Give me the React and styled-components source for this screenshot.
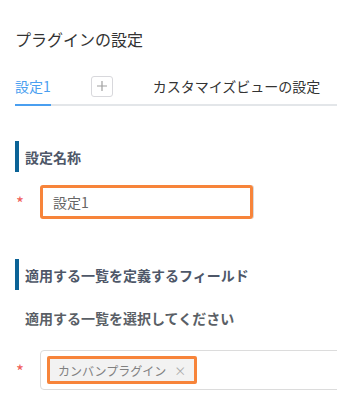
import React from 'react';
import styled, { createGlobalStyle } from 'styled-components';

const Global = createGlobalStyle`
  html, body { margin: 0; padding: 0; background: #fff; }
  body { font-family: "Noto Sans CJK JP", "Noto Sans", sans-serif; overflow: hidden; }
  * { box-sizing: border-box; }
`;

const Page = styled.div`
  width: 337px;
  height: 418px;
  overflow: hidden;
  padding: 27px 0 0 15px;
`;

const Title = styled.h1`
  margin: 0;
  font-size: 16px;
  line-height: 24px;
  font-weight: 400;
  color: #333;
`;

const TabBar = styled.div`
  margin-top: 20px;
  height: 35px;
  display: flex;
  align-items: stretch;
  border-bottom: 2px solid #e3e6e9;
`;

const Tab = styled.div`
  display: flex;
  align-items: center;
  padding-bottom: 4px;
  font-size: 14px;
  line-height: 20px;
  white-space: nowrap;
  color: ${p => (p.$active ? '#4a9ff0' : '#333')};
  border-bottom: 2px solid ${p => (p.$active ? '#4a9ff0' : 'transparent')};
  margin-bottom: -2px;
  margin-right: ${p => p.$gap || 0}px;
`;

const AddButton = styled.div`
  align-self: center;
  margin-top: -3px;
  width: 22px;
  height: 21px;
  border: 1px solid #d8d8dc;
  border-radius: 3px;
  display: flex;
  align-items: center;
  justify-content: center;
  margin-right: 40px;
`;

const Section = styled.section`
  margin-top: ${p => p.$top}px;
`;

const SectionHeader = styled.div`
  height: 31px;
  border-left: 4px solid #0b6396;
  padding-left: 6px;
  display: flex;
  align-items: center;
  font-size: 14px;
  font-weight: 700;
  color: #4e5768;
`;

const FieldRow = styled.div`
  margin-top: ${p => p.$top}px;
  display: flex;
  align-items: center;
`;

const Required = styled.span`
  flex: none;
  width: 25px;
  padding-left: 1px;
  color: #f0605a;
  font-size: 17px;
  line-height: 17px;
`;

const TextInput = styled.div`
  width: 213px;
  height: 34px;
  border: 3px solid #f7843a;
  border-radius: 3px;
  padding-left: 10px;
  display: flex;
  align-items: center;
  font-size: 14px;
  color: #666;
  box-shadow: 1px 0 0 #dadada;
`;

const FieldLabel = styled.div`
  margin-top: 18px;
  padding-left: 10px;
  font-size: 14px;
  line-height: 20px;
  font-weight: 700;
  color: #5a5f66;
`;

const MultiSelect = styled.div`
  flex: none;
  width: 340px;
  height: 40px;
  border: 1px solid #dcdcdc;
  border-radius: 4px;
  padding-left: 6px;
  display: flex;
  align-items: center;
`;

const Chip = styled.div`
  height: 28px;
  border: 3px solid #f7843a;
  border-radius: 2px;
  background: #f2f2f2;
  padding: 0 8px 0 8px;
  display: flex;
  align-items: center;
  gap: 8px;
  font-size: 12px;
  color: #808080;
  white-space: nowrap;
`;

const Close = styled.span`
  color: #aaa;
  font-size: 12px;
`;

export default function App() {
  return (
    <>
      <Global />
      <Page>
        <Title>プラグインの設定</Title>
        <TabBar>
          <Tab $active $gap={40}>設定1</Tab>
          <AddButton>
            <svg width="12" height="12" viewBox="0 0 12 12">
              <path d="M6 1v10M1 6h10" stroke="#a0a0a0" strokeWidth="1.2" />
            </svg>
          </AddButton>
          <Tab>カスタマイズビューの設定</Tab>
        </TabBar>
        <Section $top={35}>
          <SectionHeader>設定名称</SectionHeader>
          <FieldRow $top={13}>
            <Required>*</Required>
            <TextInput>設定1</TextInput>
          </FieldRow>
        </Section>
        <Section $top={40}>
          <SectionHeader>適用する一覧を定義するフィールド</SectionHeader>
          <FieldLabel>適用する一覧を選択してください</FieldLabel>
          <FieldRow $top={22}>
            <Required>*</Required>
            <MultiSelect>
              <Chip>
                カンバンプラグイン<Close>×</Close>
              </Chip>
            </MultiSelect>
          </FieldRow>
        </Section>
      </Page>
    </>
  );
}
